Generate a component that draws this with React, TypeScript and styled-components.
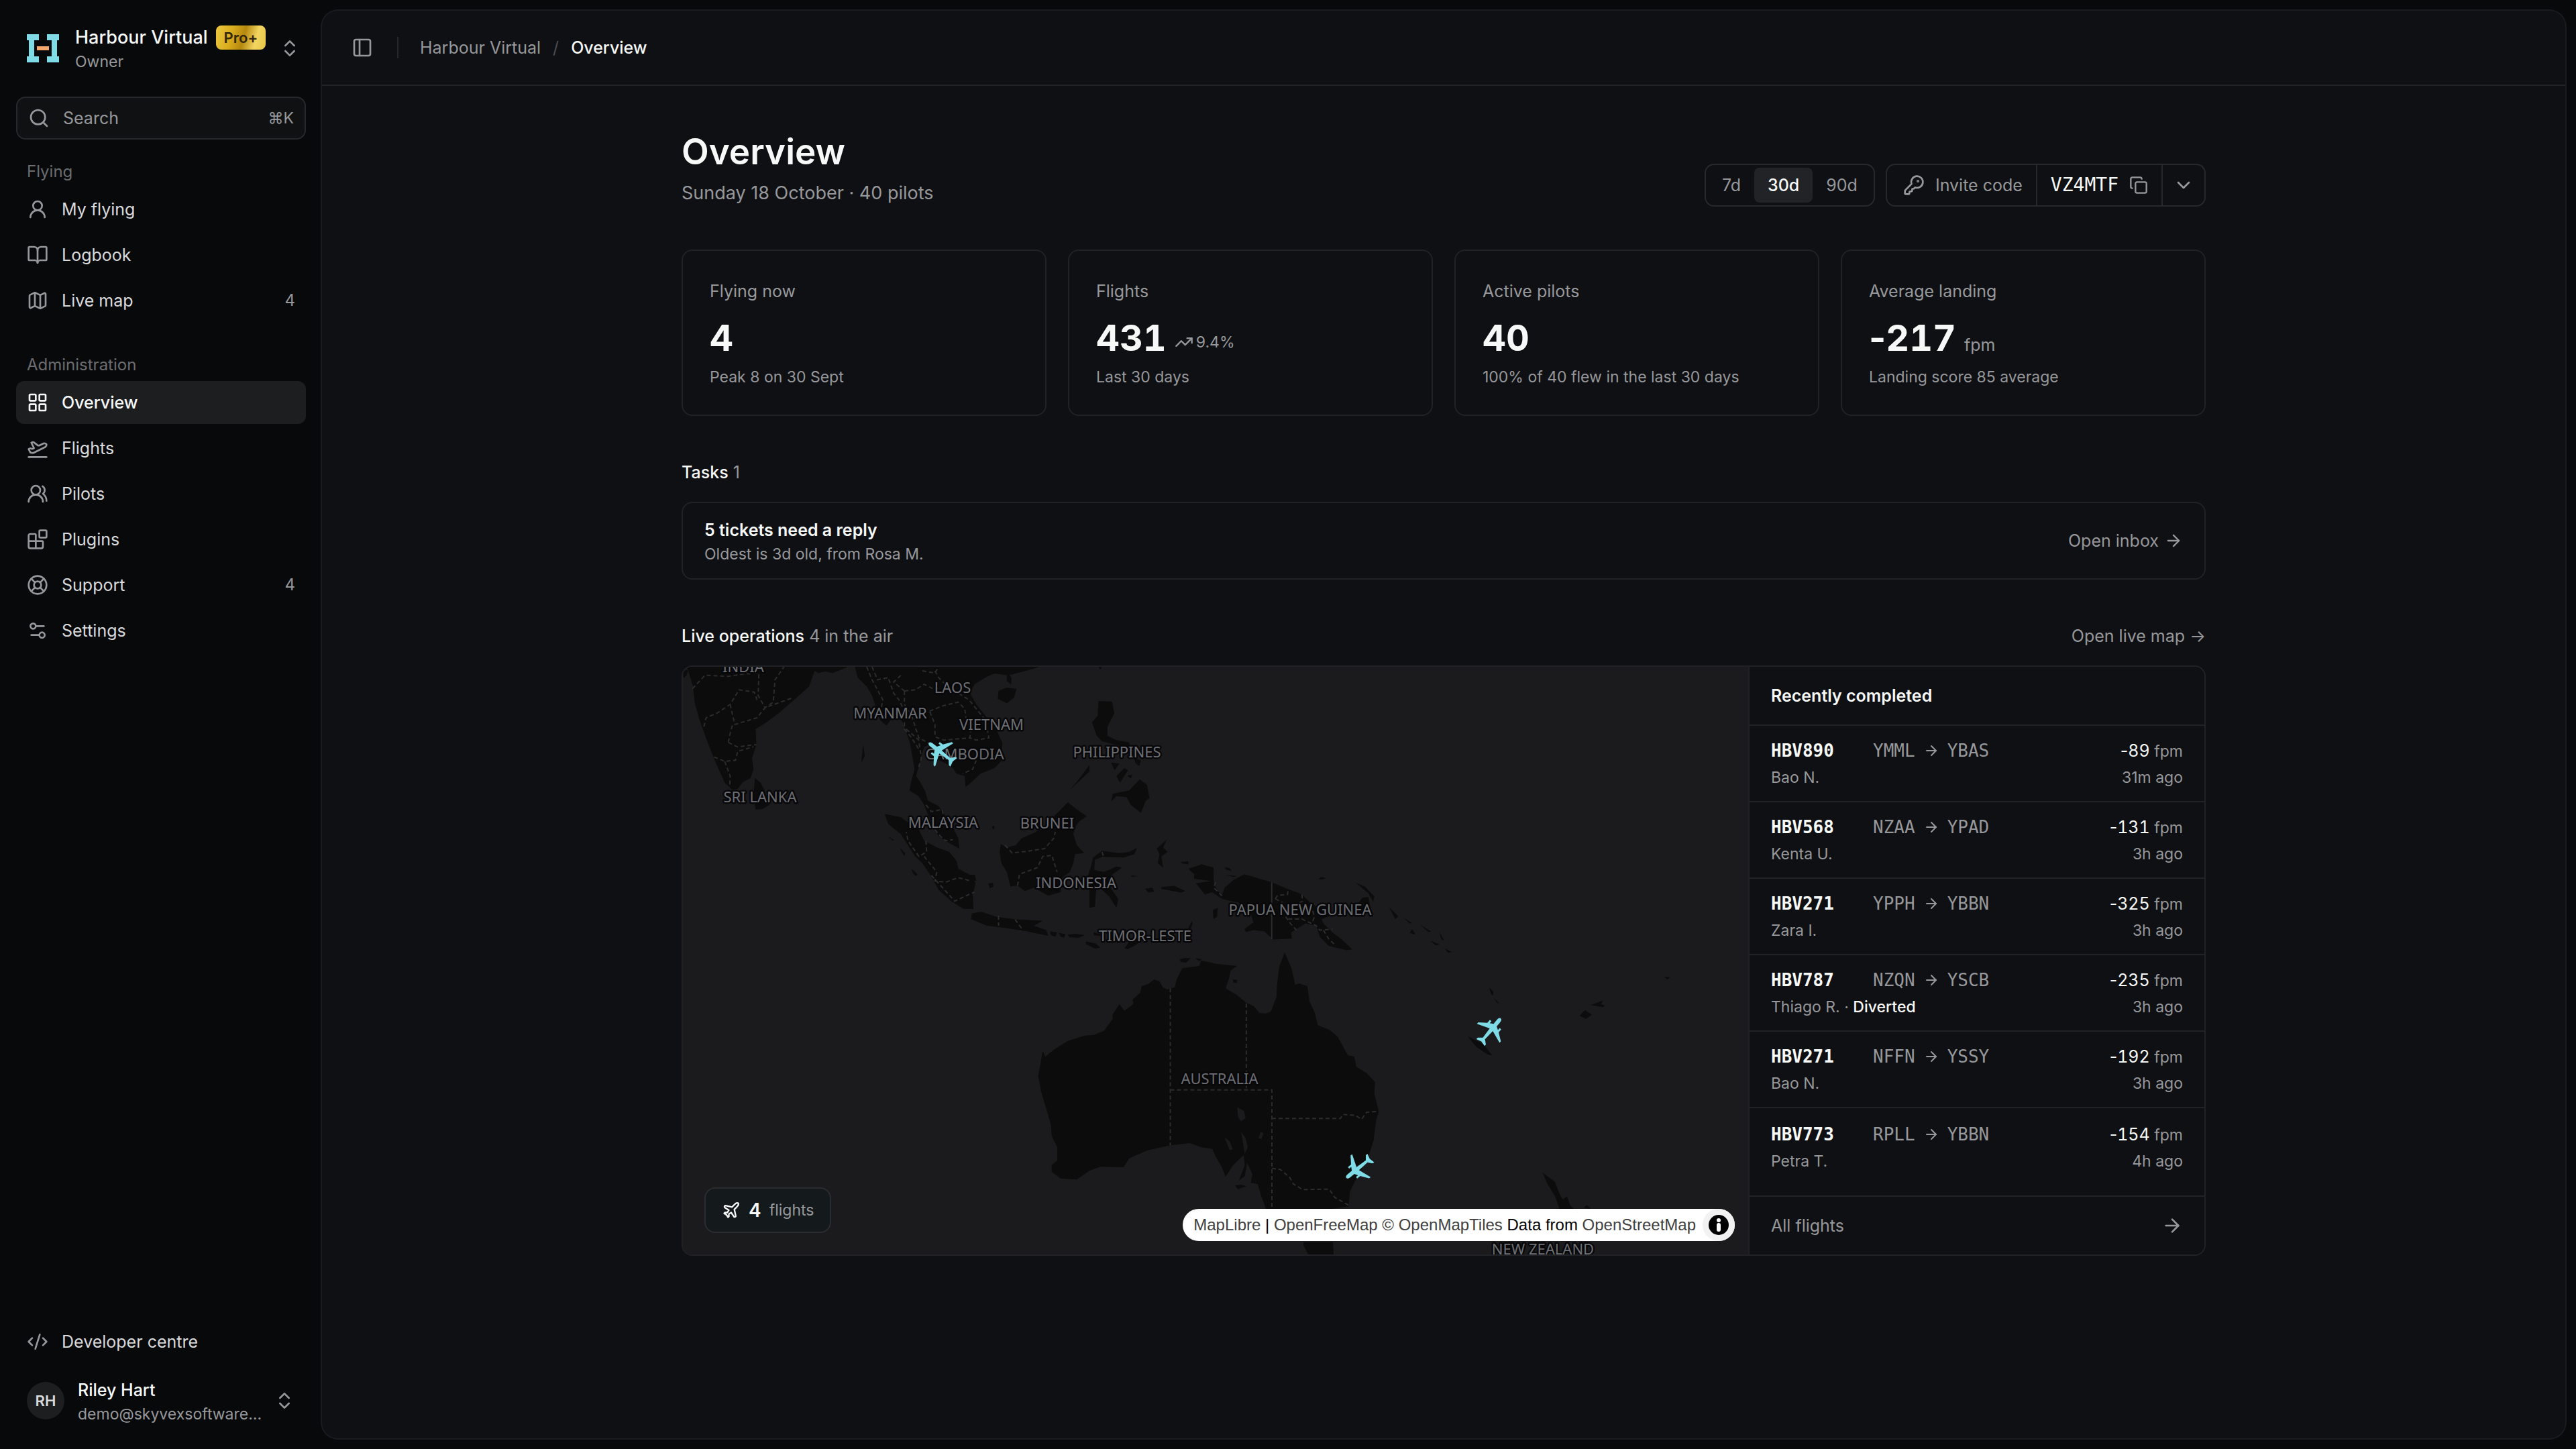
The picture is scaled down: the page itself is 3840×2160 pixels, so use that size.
import React from "react";
import styled, { createGlobalStyle, css } from "styled-components";
import {
  ArrowRight,
  Blocks,
  BookOpen,
  ChevronDown,
  ChevronsUpDown,
  CodeXml,
  Copy,
  KeyRound,
  LayoutGrid,
  LifeBuoy,
  Map as MapIcon,
  PanelLeft,
  Plane,
  PlaneTakeoff,
  Search,
  Settings2,
  TrendingUp,
  UserRound,
  UsersRound,
  type LucideIcon,
} from "lucide-react";

const color = {
  page: "#08090b",
  panel: "#0f1013",
  line: "#212225",
  control: "#27282b",
  active: "#1d1e20",
  text: "#f7f8f8",
  nav: "#d9dadc",
  muted: "#97989b",
  dim: "#6c6d70",
  cyan: "#7fdbe6",
};

const sans = `Inter, "Noto Sans", sans-serif`;
const mono = `"DejaVu Sans Mono", "Liberation Mono", monospace`;

const GlobalStyle = createGlobalStyle`
  *, *::before, *::after { box-sizing: border-box; }
  body { margin: 0; background: ${color.page}; color: ${color.text}; font: 400 25px/40px ${sans}; -webkit-font-smoothing: antialiased; }
  button, input { font: inherit; color: inherit; background: none; border: 0; padding: 0; margin: 0; }
  button { cursor: pointer; text-align: left; }
  a { color: inherit; text-decoration: none; }
  ul { list-style: none; margin: 0; padding: 0; }
  h1, h2, p { margin: 0; font: inherit; }
  svg { flex: none; display: block; }
`;

const Shell = styled.div`
  display: grid;
  grid-template-columns: 480px minmax(0, 1fr);
  min-height: 100vh;
`;

/* Sidebar */

const Sidebar = styled.aside`
  display: flex;
  flex-direction: column;
  padding: 24px;
`;

const AccountButton = styled.button<{ $gap: number }>`
  display: flex;
  align-items: center;
  gap: ${(p) => p.$gap}px;
  height: 96px;
  padding: 0 ${(p) => (p.$gap === 24 ? 8 : 16)}px 0 16px;
  color: ${color.muted};
`;

const AccountText = styled.span`
  display: flex;
  flex: 1;
  flex-direction: column;
  min-width: 0;
  white-space: nowrap;
`;

const AccountName = styled.span<{ $large?: boolean }>`
  display: flex;
  align-items: center;
  gap: 12px;
  height: 40px;
  font-size: ${(p) => (p.$large ? 27 : 25)}px;
  font-weight: 500;
  color: ${color.text};
`;

const AccountMeta = styled.span`
  font-size: 23px;
  line-height: 32px;
  color: ${color.muted};
`;

const PlanBadge = styled.span`
  padding: 0 12px;
  border-radius: 8px;
  font-size: 22px;
  line-height: 36px;
  font-weight: 600;
  color: #33260a;
  background: linear-gradient(105deg, #ecc940 0%, #d8ac1c 32%, #b5880f 55%, #f2d560 78%, #e8c644 100%);
`;

const Avatar = styled.span`
  width: 56px;
  height: 56px;
  border-radius: 50%;
  background: #1d1e20;
  color: ${color.nav};
  font-size: 22px;
  line-height: 56px;
  font-weight: 600;
  text-align: center;
`;

const SearchBox = styled.label`
  display: flex;
  align-items: center;
  gap: 20px;
  height: 64px;
  margin: 24px 0;
  padding: 0 16px;
  border: 2px solid ${color.control};
  border-radius: 14px;
  background: #101113;
  color: ${color.muted};

  input {
    flex: 1;
    min-width: 0;
    outline: 0;
  }
  input::placeholder {
    color: ${color.muted};
    opacity: 1;
  }
  kbd {
    font: inherit;
    font-size: 23px;
  }
`;

const NavGroup = styled.nav`
  display: flex;
  flex-direction: column;
  gap: 4px;
  margin-bottom: 40px;
`;

const NavLabel = styled.h2`
  padding: 0 16px;
  margin-bottom: -4px;
  font-size: 24px;
  line-height: 48px;
  color: ${color.dim};
`;

const NavLink = styled.a<{ $active?: boolean }>`
  display: flex;
  align-items: center;
  gap: 20px;
  height: 64px;
  padding: 0 16px;
  border-radius: 12px;
  color: ${color.nav};

  svg {
    color: ${color.muted};
  }
  ${(p) =>
    p.$active &&
    css`
      background: ${color.active};
      color: ${color.text};
      font-weight: 500;
      svg {
        color: ${color.text};
      }
    `}
`;

const NavCount = styled.span`
  margin-left: auto;
  font-size: 24px;
  color: ${color.muted};
`;

const SidebarFooter = styled.div`
  display: flex;
  flex-direction: column;
  gap: 8px;
  margin-top: auto;
`;

/* Main panel */

const Panel = styled.main`
  margin: 16px 16px 16px 0;
  border-radius: 24px;
  background: ${color.panel};
  box-shadow: 0 0 0 2px #1a1b1e;
`;

const TopBar = styled.header`
  display: flex;
  align-items: center;
  height: 112px;
  padding: 0 32px;
  border-bottom: 2px solid ${color.line};
  color: ${color.muted};
`;

const IconButton = styled.button`
  display: grid;
  place-items: center;
  width: 56px;
  height: 56px;
`;

const Separator = styled.span`
  width: 2px;
  height: 32px;
  margin: 0 32px 0 24px;
  background: ${color.control};
`;

const Crumbs = styled.nav`
  display: flex;
  gap: 18px;

  i {
    font-style: normal;
    color: #4c4d50;
  }
  span {
    color: ${color.text};
    font-weight: 500;
  }
`;

const Content = styled.div`
  display: flex;
  flex-direction: column;
  gap: 64px;
  max-width: 2400px;
  margin: 0 auto;
  padding: 64px;
`;

const TitleRow = styled.div`
  display: flex;
  align-items: flex-end;
  justify-content: space-between;
`;

const Title = styled.h1`
  margin-bottom: 8px;
  font-size: 53px;
  line-height: 68px;
  font-weight: 600;
`;

const Subtitle = styled.p`
  font-size: 27px;
  color: ${color.muted};
`;

const Controls = styled.div`
  display: flex;
  gap: 16px;
`;

const Segments = styled.div`
  display: flex;
  height: 64px;
  padding: 4px;
  border: 2px solid ${color.control};
  border-radius: 14px;
`;

const Segment = styled.button<{ $on?: boolean }>`
  padding: 0 20px;
  border-radius: 8px;
  color: ${(p) => (p.$on ? color.text : color.muted)};
  background: ${(p) => (p.$on ? "#222326" : "transparent")};
  font-weight: ${(p) => (p.$on ? 500 : 400)};
`;

const InviteGroup = styled.div`
  display: flex;
  height: 64px;
  border: 2px solid ${color.control};
  border-radius: 14px;
  color: ${color.muted};

  > * + * {
    border-left: 2px solid ${color.control};
  }
`;

const InviteLabel = styled.span`
  display: flex;
  align-items: center;
  gap: 16px;
  padding: 0 20px 0 24px;
`;

const InviteCode = styled.button`
  display: flex;
  align-items: center;
  gap: 16px;
  padding: 0 20px;

  code {
    font: 400 28px/40px ${mono};
    color: ${color.text};
  }
`;

const InviteMore = styled.button`
  display: grid;
  place-items: center;
  width: 64px;
`;

const cardFrame = css`
  border: 2px solid ${color.line};
  border-radius: 16px;
`;

const Stats = styled.section`
  display: grid;
  grid-template-columns: repeat(4, minmax(0, 1fr));
  gap: 32px;
`;

const StatCard = styled.article`
  ${cardFrame}
  padding: 40px;
  color: ${color.muted};
`;

const StatRow = styled.div`
  display: flex;
  align-items: baseline;
  gap: 12px;
  margin: 22px 0 14px;
  height: 56px;
  line-height: 56px;
`;

const StatValue = styled.strong`
  font-size: 54px;
  font-weight: 700;
  font-variant-numeric: tabular-nums;
  color: ${color.text};
`;

const StatUnit = styled.span`
  line-height: 32px;
`;

/* The sign keeps its own narrow width beside tabular digits. */
const Sign = styled.span`
  font-variant-numeric: proportional-nums;
`;

const Trend = styled.span`
  display: flex;
  align-items: center;
  align-self: center;
  gap: 4px;
  margin-top: 12px;
  font-size: 23px;
  line-height: 32px;
`;

const Small = styled.p`
  font-size: 23px;
  line-height: 32px;
  color: ${color.muted};
`;

const Section = styled.section`
  display: flex;
  flex-direction: column;
  gap: 24px;
`;

const SectionHead = styled.div`
  display: flex;
  justify-content: space-between;
  color: ${color.muted};

  h2 {
    font-weight: 400;
  }
  strong {
    font-weight: 500;
    color: ${color.text};
  }
`;

const TaskCard = styled.a`
  ${cardFrame}
  display: flex;
  align-items: center;
  justify-content: space-between;
  padding: 20px 32px;

  strong {
    display: block;
    font-weight: 600;
  }
`;

const TaskAction = styled.span`
  display: flex;
  align-items: center;
  gap: 8px;
  color: ${color.muted};
`;

const Operations = styled.div`
  ${cardFrame}
  display: grid;
  grid-template-columns: minmax(0, 1fr) 680px;
  overflow: hidden;
`;

const MapArea = styled.div`
  position: relative;
  background: #1b1b1d;
`;

const MapDrawing = styled.svg`
  position: absolute;
  inset: 0;
  width: 100%;
  height: 100%;

  text {
    font: 400 22px "Noto Sans", sans-serif;
    text-anchor: middle;
    fill: #6e6f74;
    stroke: #08080a;
    stroke-width: 5px;
    stroke-linejoin: round;
    paint-order: stroke;
  }
`;

const FlightsChip = styled.div`
  position: absolute;
  left: 32px;
  bottom: 32px;
  display: flex;
  align-items: center;
  gap: 12px;
  height: 68px;
  padding: 0 24px;
  border: 2px solid #2a2d2f;
  border-radius: 16px;
  background: #14191b;
  color: ${color.muted};
  font-size: 23px;

  svg {
    color: ${color.text};
  }
  strong {
    font-size: 28px;
    font-weight: 600;
    color: ${color.text};
  }
`;

const Attribution = styled.div`
  position: absolute;
  right: 20px;
  bottom: 20px;
  display: flex;
  align-items: center;
  gap: 10px;
  height: 48px;
  padding-left: 16px;
  border-radius: 24px;
  background: #fff;
  color: #000;
  font: 400 24px/40px "Liberation Sans", Arial, sans-serif;
  white-space: nowrap;

  a {
    color: #404040;
  }
  button {
    display: grid;
    place-items: center;
    width: 48px;
    height: 48px;
    border-radius: 24px;
    background: #f2f2f2;
  }
`;

const Recent = styled.div`
  display: flex;
  flex-direction: column;
  border-left: 2px solid ${color.line};
`;

const RecentHead = styled.h2`
  padding: 23px 32px;
  border-bottom: 2px solid ${color.line};
  font-weight: 600;
`;

const FlightRow = styled.li`
  display: grid;
  grid-template-columns: 152px minmax(0, 1fr) auto;
  grid-auto-rows: 40px;
  padding: 17px 32px 15px;
  border-bottom: 2px solid ${color.line};
  color: ${color.muted};
  font-size: 23px;

  &:last-child {
    padding: 19px 32px 31px;
  }
  > :nth-child(4) {
    grid-column: 1 / 3;
  }
  > :nth-child(3),
  > :nth-child(5) {
    text-align: right;
  }
`;

const Callsign = styled.span`
  font: 700 26px/40px ${mono};
  color: ${color.text};
`;

const Route = styled.span`
  display: flex;
  align-items: center;
  gap: 12px;
  font: 400 26px/40px ${mono};
`;

const Rate = styled.strong`
  font-size: 25px;
  font-weight: 400;
  font-variant-numeric: tabular-nums;
  color: ${color.text};
`;

const Flag = styled.strong`
  font-weight: 500;
  color: ${color.text};
`;

const AllFlights = styled.a`
  display: flex;
  align-items: center;
  justify-content: space-between;
  padding: 23px 32px;
  color: ${color.muted};
`;

/* Data */

type NavEntry = { label: string; icon: LucideIcon; count?: number; active?: boolean };

const flying: NavEntry[] = [
  { label: "My flying", icon: UserRound },
  { label: "Logbook", icon: BookOpen },
  { label: "Live map", icon: MapIcon, count: 4 },
];

const administration: NavEntry[] = [
  { label: "Overview", icon: LayoutGrid, active: true },
  { label: "Flights", icon: PlaneTakeoff },
  { label: "Pilots", icon: UsersRound },
  { label: "Plugins", icon: Blocks },
  { label: "Support", icon: LifeBuoy, count: 4 },
  { label: "Settings", icon: Settings2 },
];

const recent = [
  { id: "HBV890", from: "YMML", to: "YBAS", rate: 89, pilot: "Bao N.", ago: "31m ago" },
  { id: "HBV568", from: "NZAA", to: "YPAD", rate: 131, pilot: "Kenta U.", ago: "3h ago" },
  { id: "HBV271", from: "YPPH", to: "YBBN", rate: 325, pilot: "Zara I.", ago: "3h ago" },
  { id: "HBV787", from: "NZQN", to: "YSCB", rate: 235, pilot: "Thiago R.", ago: "3h ago", flag: "Diverted" },
  { id: "HBV271", from: "NFFN", to: "YSSY", rate: 192, pilot: "Bao N.", ago: "3h ago" },
  { id: "HBV773", from: "RPLL", to: "YBBN", rate: 154, pilot: "Petra T.", ago: "4h ago" },
];

const countries: [string, number, number][] = [
  ["INDIA", 90, 8],
  ["LAOS", 402, 39],
  ["MYANMAR", 309, 77],
  ["VIETNAM", 460, 94],
  ["CAMBODIA", 420, 138],
  ["PHILIPPINES", 647, 135],
  ["SRI LANKA", 115, 202],
  ["MALAYSIA", 388, 240],
  ["BRUNEI", 543, 241],
  ["INDONESIA", 586, 330],
  ["TIMOR-LESTE", 689, 409],
  ["PAPUA NEW GUINEA", 920, 370],
  ["AUSTRALIA", 800, 622],
  ["NEW ZEALAND", 1282, 876],
];

const aircraft = [
  { x: 384, y: 127, heading: -52 },
  { x: 1205, y: 541, heading: 40 },
  { x: 1006, y: 748, heading: 231 },
];

/* Land outlines, each list in its own sheet's units */

const asiaLand = [
  "45 282 62 370 66 440 80 520 100 610 122 700 150 800 170 830 186 828 200 798 222 780 230 740 226 690 238 630 236 560 262 535 300 490 350 420 385 370 400 300 410 310 430 303 450 310 490 285 490 282",
  "32 300 48 296 44 320 36 332",
  "234 780 250 800 262 840 274 900 255 918 236 920 230 860",
  "512 282 520 330 545 370 560 410 570 460 582 520 600 545 620 500 640 510 652 560 665 620 672 680 678 740 668 800 664 835 690 862 705 900 715 940 735 1010 745 1040 775 1070 803 1095 800 1050 785 1000 765 950 745 905 715 880 708 840 695 800 682 770 692 720 697 680 705 640 720 630 722 680 760 710 785 735 795 760 818 770 820 820 835 800 862 760 900 735 922 700 922 620 905 560 880 510 850 450 832 400 845 360 875 330 900 312 940 320 965 310 1010 290 1025 282",
  "912 390 935 375 962 380 955 420 935 445 910 425",
  "935 308 948 330 947 362 935 345",
  "595 940 640 955 665 985 690 1010 705 1060 740 1090 775 1110 795 1150 800 1185 835 1215 848 1250 840 1300 842 1365 815 1365 780 1330 745 1280 725 1220 700 1160 680 1130 660 1080 640 1030 605 985",
  "604 1040 620 1055 618 1060",
  "638 1092 652 1115 650 1128 642 1110",
  "670 1185 686 1210 682 1218 674 1205",
  "838 1385 865 1378 905 1400 960 1412 1035 1418 1010 1440 1045 1460 1050 1485 990 1465 930 1450 880 1440 835 1410",
  "1055 1465 1075 1470 1070 1490 1058 1482",
  "1080 1472 1098 1478 1094 1494 1084 1488",
  "1104 1480 1126 1476 1152 1482 1134 1494 1110 1492",
  "1155 1510 1182 1520 1195 1538 1180 1542 1155 1522",
  "1176 1470 1200 1478 1196 1486 1178 1482",
  "1262 1540 1275 1515 1310 1490 1325 1490 1290 1530 1270 1545",
  "1440 1450 1450 1420 1452 1430 1446 1455",
  "918 1075 935 1090 960 1080 975 1050 1010 1025 1040 1000 1060 960 1085 920 1105 888 1130 920 1157 950 1135 975 1125 1000 1120 1030 1130 1080 1150 1115 1125 1120 1120 1160 1110 1200 1085 1230 1085 1290 1050 1305 1010 1270 985 1285 965 1260 945 1265 935 1200 920 1160 915 1110",
  "883 1252 895 1248 898 1265 888 1272",
  "832 1212 846 1212 850 1240 838 1236",
  "1175 1135 1200 1105 1245 1115 1275 1110 1297 1092 1290 1120 1260 1135 1200 1132 1180 1145 1178 1190 1205 1200 1240 1175 1255 1180 1225 1215 1215 1250 1245 1320 1240 1360 1220 1310 1200 1280 1185 1250 1180 1355 1165 1360 1165 1280 1160 1220 1170 1170",
  "1380 1055 1370 1090 1382 1110 1365 1130 1370 1180 1355 1160 1360 1120 1352 1095",
  "1320 1275 1340 1270 1345 1288 1328 1292",
  "1365 1268 1400 1262 1432 1285 1420 1292 1365 1275",
  "1280 1215 1298 1218 1284 1222",
  "1418 1155 1440 1152 1440 1165 1424 1162",
  "1440 1185 1475 1168 1510 1180 1510 1235 1470 1230 1450 1200",
  "1508 1370 1522 1360 1520 1400 1510 1410",
  "1190 435 1228 438 1234 490 1215 550 1215 590 1240 610 1275 620 1280 650 1250 635 1200 615 1185 590 1172 530 1188 500",
  "1225 710 1248 715 1235 745",
  "1262 735 1272 745 1250 800 1240 770",
  "1270 768 1284 764 1280 782",
  "1288 690 1308 700 1304 725 1294 715",
  "1305 785 1325 810 1332 870 1322 880 1308 935 1280 900 1268 865 1240 860 1225 885 1230 850 1275 835",
  "1165 720 1165 750 1112 830 1140 775",
  "535 630 540 680 530 710",
  "894 995 900 992 900 1008 895 1006",
  "1190 282 1200 284 1194 294",
];

const asiaBorders = [
  "60 380 95 320 160 325 200 315 245 310 243 410 262 465 285 440 290 340 315 282",
  "92 550 98 510 130 488 165 450 190 385 232 395 240 430",
  "165 450 178 540 240 510 262 465 340 420",
  "160 620 165 580 172 540",
  "160 620 185 640 238 630",
  "120 685 150 705 180 700 186 660 230 640",
  "150 705 165 770 164 820",
  "560 282 575 340 605 330 620 400 635 430 650 480 650 560 670 600 690 650",
  "545 282 560 340 590 430 585 470",
  "655 560 690 610 697 690 690 730",
  "650 390 680 385 705 360 735 385",
  "650 390 650 450 670 500 690 600 720 625",
  "720 480 760 455 800 440 818 470 822 520 835 560 832 600 760 610 735 595 735 540 720 480",
  "735 300 745 330 770 370 830 430 855 480 875 520 885 600 850 610 832 600",
  "640 320 620 350 650 390",
  "700 300 735 310 745 282",
  "850 700 840 740 812 760",
  "710 900 725 930 755 920 760 960",
  "735 1010 750 1040 765 1060 785 1055",
  "710 1060 712 1110 690 1130 660 1060 655 1020",
  "705 1130 740 1200 735 1240 765 1245 800 1225 835 1240",
  "725 1215 790 1330 830 1300 845 1290",
  "912 1395 912 1440",
  "958 1412 975 1450 972 1465",
  "930 1080 950 1115 1000 1105 1040 1095 1065 1050 1070 1020",
  "965 1260 970 1210 1020 1180 1035 1130 1060 1125 1075 1200",
  "1200 1110 1205 1135",
];

const papuaLand = [
  "0 1180 20 1165 52 1180 55 1245 65 1285 78 1300 85 1270 110 1235 140 1210 215 1245 260 1275 300 1300 325 1340 355 1370 380 1395 355 1410 360 1430 385 1470 410 1500 440 1545 425 1550 375 1530 350 1490 340 1440 310 1430 285 1455 270 1470 272 1498 220 1502 195 1465 165 1460 145 1468 140 1455 165 1425 160 1395 130 1340 78 1320 50 1290 30 1300 5 1250 48 1240 0 1230",
  "450 1248 475 1265 502 1310 498 1332 485 1295",
  "468 1315 485 1312 490 1360 460 1385 440 1380",
  "85 1178 98 1182 105 1195 90 1190",
  "86 1213 118 1218 110 1222",
  "346 1230 355 1222 368 1228 352 1234",
  "543 1358 568 1398 560 1410",
  "583 1405 607 1428 600 1430",
  "630 1437 660 1466 652 1468",
  "683 1468 696 1508 688 1500",
  "658 1508 684 1524 672 1528",
  "600 1472 607 1455 616 1480",
  "698 1542 718 1558 706 1560",
];

const papuaBorders = [
  "226 1320 232 1305 260 1300 262 1275",
  "226 1320 245 1335 240 1350",
  "300 1300 302 1330 290 1340",
  "255 1400 268 1430 285 1460",
  "262 1410 300 1410 340 1440 350 1460 385 1455",
  "325 1345 335 1400 330 1420",
  "60 1245 55 1270 80 1310",
  "360 1460 375 1500 395 1530",
];

const australiaLand = [
  "-35 180 -50 200 -68 210 -72 240 -92 270 -90 290 -114 320 -127 290 -146 340 -144 355 -155 380 -168 410 -195 428 -221 432 -264 455 -297 490 -324 525 -331 500 -337 560 -343 610 -335 680 -321 760 -309 830 -307 880 -292 930 -292 990 -307 1010 -307 1040 -283 1070 -240 1075 -206 1035 -178 1018 -116 1020 -101 980 -54 945 8 922 60 912 90 930 120 938 128 970 145 1020 155 1062 175 1010 203 965 206 1010 190 1080 206 1060 212 1000 226 1050 222 1090 240 1095 250 1150 262 1205 290 1230 400 1230 440 1205 482 1195 485 1130 505 1060 535 970 548 900 555 810 562 770 550 690 552 640 530 600 502 570 497 525 480 520 470 490 452 435 430 405 400 385 392 330 378 280 372 210 350 198 340 205 330 130 312 60 298 120 292 200 290 260 275 325 262 332 245 330 230 300 210 285 185 250 155 220 165 170 168 140 185 120 130 110 90 95 85 120 40 130 25 180 20 215 0 225 -12 215 -20 190",
  "180 1102 195 1098 210 1105 188 1118",
  "33 90 45 85 62 85 50 105 36 102",
  "74 84 92 90 84 98",
  "174 180 186 182 184 196 176 194",
  "362 1355 440 1355 442 1412 375 1412 362 1370",
  "997 1045 1030 1085 1040 1130 1050 1165 1062 1150 1070 1190 1080 1206 1042 1206 1030 1150 1010 1095",
  "1105 1200 1115 1190 1125 1206",
  "798 434 840 470 863 520 850 515 820 480",
  "855 215 866 235 866 252 860 245",
  "868 262 882 288 876 284",
  "1095 342 1110 318 1128 338 1112 356",
  "1125 295 1158 274 1152 290 1162 296 1158 304",
  "1320 168 1336 170 1328 180",
];

const australiaLakes = [
  "186 752 204 768 208 800 196 815 188 795",
  "152 885 166 905 174 940 166 944",
  "248 862 256 868 250 894 242 890",
  "196 860 208 890 214 930 206 960",
];

const australiaBorders = [
  "8 220 8 922",
  "210 288 210 674",
  "8 674 278 674 278 1210",
  "278 802 460 802 466 784 500 788 516 806 530 774 560 770",
  "278 1025 300 1030 325 1065 335 1095 360 1120 430 1118 445 1155 482 1190",
];

function Outlines({ land, borders, holes = [] }: { land: string[]; borders: string[]; holes?: string[] }) {
  return (
    <>
      {land.map((points) => (
        <polygon key={points} points={points} fill="#0c0c0c" />
      ))}
      {holes.map((points) => (
        <polygon key={points} points={points} fill="#1b1b1d" />
      ))}
      {borders.map((points) => (
        <polyline
          key={points}
          points={points}
          fill="none"
          stroke="#2c2c2e"
          strokeWidth={2}
          strokeDasharray="6 4"
          vectorEffect="non-scaling-stroke"
        />
      ))}
    </>
  );
}

function WorldMap() {
  return (
    <MapDrawing viewBox="0 0 1588 876" preserveAspectRatio="xMidYMid slice" role="img" aria-label="Live flights">
      <g transform="translate(-18 -94) scale(.5357 .3333)">
        <Outlines land={asiaLand} borders={asiaBorders} />
      </g>
      <g transform="translate(762 -94) scale(.5357 .3333)">
        <Outlines land={papuaLand} borders={papuaBorders} />
        <path d="M216 1246V1500" stroke="#2c2c2e" strokeWidth={2} vectorEffect="non-scaling-stroke" />
      </g>
      <g transform="translate(722 406) scale(.5612 .3333)">
        <Outlines land={australiaLand} borders={australiaBorders} holes={australiaLakes} />
      </g>
      {countries.map(([name, x, y]) => (
        <text key={name} x={x} y={y}>
          {name}
        </text>
      ))}
      {aircraft.map((a) => (
        <g key={a.x} transform={`translate(${a.x} ${a.y}) rotate(${a.heading})`} fill={color.cyan}>
          <path d="M0-22c2 0 3 2 3 6v7l5 3v-4h3v6l11 8v3L3 0 2 17l6 5v3l-8-2-8 2v-3l6-5L-3 0l-19 7V4l11-8v-6h3v4l5-3v-7c0-4 1-6 3-6z" />
        </g>
      ))}
    </MapDrawing>
  );
}

function Logo() {
  return (
    <svg width="48" height="42" viewBox="0 0 48 42" aria-hidden="true">
      <path fill={color.cyan} d="M0 0h18v9h-7v24h7v9H0v-9h3V9H0zM30 0h18v9h-3v24h3v9H30v-9h7V9h-7z" />
      <path fill="#f6a96c" d="M15 18h18v6H15z" />
    </svg>
  );
}

function NavItems({ items }: { items: NavEntry[] }) {
  return (
    <>
      {items.map(({ label, icon: Icon, count, active }) => (
        <NavLink key={label} href="#" $active={active} aria-current={active ? "page" : undefined}>
          <Icon size={32} />
          {label}
          {count !== undefined && <NavCount>{count}</NavCount>}
        </NavLink>
      ))}
    </>
  );
}

export default function App() {
  return (
    <>
      <GlobalStyle />
      <Shell>
        <Sidebar>
          <AccountButton $gap={24}>
            <Logo />
            <AccountText>
              <AccountName $large>
                Harbour Virtual <PlanBadge>Pro+</PlanBadge>
              </AccountName>
              <AccountMeta>Owner</AccountMeta>
            </AccountText>
            <ChevronsUpDown size={32} />
          </AccountButton>
          <SearchBox>
            <Search size={32} />
            <input type="text" placeholder="Search" aria-label="Search" />
            <kbd>⌘K</kbd>
          </SearchBox>
          <NavGroup aria-label="Flying">
            <NavLabel>Flying</NavLabel>
            <NavItems items={flying} />
          </NavGroup>
          <NavGroup aria-label="Administration">
            <NavLabel>Administration</NavLabel>
            <NavItems items={administration} />
          </NavGroup>
          <SidebarFooter>
            <NavLink href="#">
              <CodeXml size={32} />
              Developer centre
            </NavLink>
            <AccountButton $gap={20}>
              <Avatar>RH</Avatar>
              <AccountText>
                <AccountName>Riley Hart</AccountName>
                <AccountMeta>demo@skyvexsoftware…</AccountMeta>
              </AccountText>
              <ChevronsUpDown size={32} />
            </AccountButton>
          </SidebarFooter>
        </Sidebar>

        <Panel>
          <TopBar>
            <IconButton aria-label="Toggle sidebar">
              <PanelLeft size={32} />
            </IconButton>
            <Separator />
            <Crumbs aria-label="Breadcrumb">
              <a href="#">Harbour Virtual</a>
              <i>/</i>
              <span>Overview</span>
            </Crumbs>
          </TopBar>

          <Content>
            <TitleRow>
              <div>
                <Title>Overview</Title>
                <Subtitle>Sunday 18 October · 40 pilots</Subtitle>
              </div>
              <Controls>
                <Segments role="group" aria-label="Period">
                  <Segment>7d</Segment>
                  <Segment $on aria-pressed="true">
                    30d
                  </Segment>
                  <Segment>90d</Segment>
                </Segments>
                <InviteGroup>
                  <InviteLabel>
                    <KeyRound size={32} />
                    Invite code
                  </InviteLabel>
                  <InviteCode aria-label="Copy invite code VZ4MTF">
                    <code>VZ4MTF</code>
                    <Copy size={28} />
                  </InviteCode>
                  <InviteMore aria-label="More invite options">
                    <ChevronDown size={32} />
                  </InviteMore>
                </InviteGroup>
              </Controls>
            </TitleRow>

            <Stats>
              <StatCard>
                <p>Flying now</p>
                <StatRow>
                  <StatValue>4</StatValue>
                </StatRow>
                <Small>Peak 8 on 30 Sept</Small>
              </StatCard>
              <StatCard>
                <p>Flights</p>
                <StatRow>
                  <StatValue>431</StatValue>
                  <Trend>
                    <TrendingUp size={28} />
                    9.4%
                  </Trend>
                </StatRow>
                <Small>Last 30 days</Small>
              </StatCard>
              <StatCard>
                <p>Active pilots</p>
                <StatRow>
                  <StatValue>40</StatValue>
                </StatRow>
                <Small>100% of 40 flew in the last 30 days</Small>
              </StatCard>
              <StatCard>
                <p>Average landing</p>
                <StatRow>
                  <StatValue>
                    <Sign>-</Sign>217
                  </StatValue>
                  <StatUnit>fpm</StatUnit>
                </StatRow>
                <Small>Landing score 85 average</Small>
              </StatCard>
            </Stats>

            <Section>
              <SectionHead>
                <h2>
                  <strong>Tasks</strong> 1
                </h2>
              </SectionHead>
              <TaskCard href="#">
                <div>
                  <strong>5 tickets need a reply</strong>
                  <Small>Oldest is 3d old, from Rosa M.</Small>
                </div>
                <TaskAction>
                  Open inbox
                  <ArrowRight size={28} />
                </TaskAction>
              </TaskCard>
            </Section>

            <Section>
              <SectionHead>
                <h2>
                  <strong>Live operations</strong> 4 in the air
                </h2>
                <a href="#">Open live map →</a>
              </SectionHead>
              <Operations>
                <MapArea>
                  <WorldMap />
                  <FlightsChip>
                    <Plane size={28} />
                    <strong>4</strong>
                    flights
                  </FlightsChip>
                  <Attribution>
                    <span>
                      <a href="#">MapLibre</a> | <a href="#">OpenFreeMap</a> <a href="#">© OpenMapTiles</a> Data from{" "}
                      <a href="#">OpenStreetMap</a>
                    </span>
                    <button aria-label="Toggle attribution">
                      <svg width="30" height="30" viewBox="0 0 30 30" aria-hidden="true">
                        <circle cx="15" cy="15" r="15" />
                        <circle cx="15" cy="8" r="3" fill="#fff" />
                        <rect x="12" y="12" width="6" height="13" rx="3" fill="#fff" />
                      </svg>
                    </button>
                  </Attribution>
                </MapArea>
                <Recent>
                  <RecentHead>Recently completed</RecentHead>
                  <ul>
                    {recent.map((f) => (
                      <FlightRow key={f.id + f.from}>
                        <Callsign>{f.id}</Callsign>
                        <Route>
                          {f.from}
                          <ArrowRight size={24} />
                          {f.to}
                        </Route>
                        <span>
                          <Rate>
                            <Sign>-</Sign>
                            {f.rate}
                          </Rate>{" "}
                          fpm
                        </span>
                        <span>
                          {f.pilot}
                          {f.flag && (
                            <>
                              {" · "}
                              <Flag>{f.flag}</Flag>
                            </>
                          )}
                        </span>
                        <span>{f.ago}</span>
                      </FlightRow>
                    ))}
                  </ul>
                  <AllFlights href="#">
                    All flights
                    <ArrowRight size={32} />
                  </AllFlights>
                </Recent>
              </Operations>
            </Section>
          </Content>
        </Panel>
      </Shell>
    </>
  );
}
